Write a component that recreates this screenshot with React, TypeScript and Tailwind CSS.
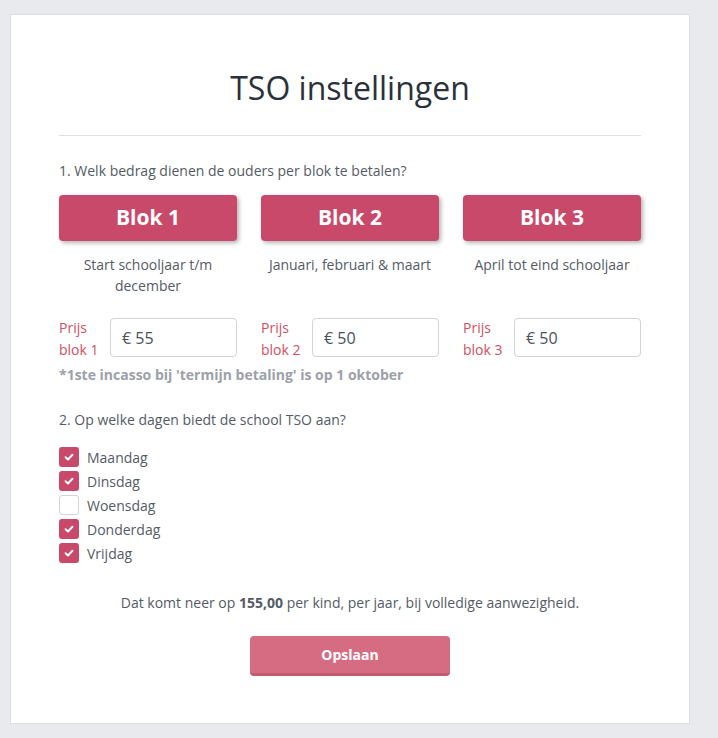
import React from "react"

const blocks = [
  { title: "Blok 1", sub: "Start schooljaar t/m december", price: "€ 55" },
  { title: "Blok 2", sub: "Januari, februari & maart", price: "€ 50" },
  { title: "Blok 3", sub: "April tot eind schooljaar", price: "€ 50" },
]

const days = [
  { name: "Maandag", checked: true },
  { name: "Dinsdag", checked: true },
  { name: "Woensdag", checked: false },
  { name: "Donderdag", checked: true },
  { name: "Vrijdag", checked: true },
]

function Check({ checked }: { checked: boolean }) {
  if (!checked) {
    return <span className="w-5 h-5 rounded-[3px] border border-[#d4d4d8] bg-white shrink-0" />
  }
  return (
    <span className="w-5 h-5 rounded-[3px] bg-[#c8496a] flex items-center justify-center shrink-0">
      <svg width="10" height="10" viewBox="0 0 10 10" fill="none">
        <path d="M1.6 5.3 L4 7.5 L8.4 2.8" stroke="white" strokeWidth="2" strokeLinecap="round" strokeLinejoin="round" />
      </svg>
    </span>
  )
}

export default function App() {
  return (
    <div className="min-h-[738px] bg-[#e9eaee] pt-[14px] pl-[10px] pb-[14px] font-['Open_Sans',sans-serif] text-[#545b66]">
      <div className="w-[680px] bg-white border border-[#dcdde0] px-[48px] pt-[51px] pb-[47px]">
        <h1 className="text-center text-[32px] leading-[44px] text-[#2b313b] font-normal">TSO instellingen</h1>
        <div className="mt-[25px] h-px bg-[#dedfe2]" />

        <p className="mt-[25px] text-[14px] leading-[20px]">1. Welk bedrag dienen de ouders per blok te betalen?</p>

        <div className="mt-[14px] grid grid-cols-3 gap-6">
          {blocks.map((b) => (
            <div key={b.title} className="flex flex-col">
              <div className="h-[46px] rounded-[4px] bg-[#c8496a] text-white text-[21px] font-bold flex items-center justify-center shadow-[2px_2px_4px_rgba(0,0,0,0.3)]">
                {b.title}
              </div>
              <p className="mt-[13px] h-[42px] text-center text-[14px] leading-[21px]">{b.sub}</p>
              <div className="mt-[21px] flex items-start">
                <div className="w-[51px] text-[14px] leading-[22px] text-[#d2505f]">
                  Prijs
                  <br />
                  blok {b.title.slice(-1)}
                </div>
                <div className="mt-px flex-1 h-[39px] border border-[#d4d4d8] rounded-[4px] flex items-center px-[11px] text-[16px] text-[#4a5160]">
                  {b.price}
                </div>
              </div>
            </div>
          ))}
        </div>

        <p className="mt-[4px] text-[14px] leading-[20px] font-bold text-[#9ca1a9]">
          *1ste incasso bij 'termijn betaling' is op 1 oktober
        </p>

        <p className="mt-[25px] text-[14px] leading-[20px]">2. Op welke dagen biedt de school TSO aan?</p>

        <div className="mt-[15px] flex flex-col">
          {days.map((d) => (
            <label key={d.name} className="h-6 flex items-center gap-2 text-[14px]">
              <Check checked={d.checked} />
              {d.name}
            </label>
          ))}
        </div>

        <p className="mt-[28px] text-center text-[14px] leading-[20px]">
          Dat komt neer op <b className="font-bold">155,00</b> per kind, per jaar, bij volledige aanwezigheid.
        </p>

        <div className="mt-[23px] flex justify-center">
          <button className="w-[200px] h-[40px] rounded-[4px] bg-[#d66c82] border-b-[3px] border-[#c25a70] text-white text-[14px] font-bold">
            Opslaan
          </button>
        </div>
      </div>
    </div>
  )
}
